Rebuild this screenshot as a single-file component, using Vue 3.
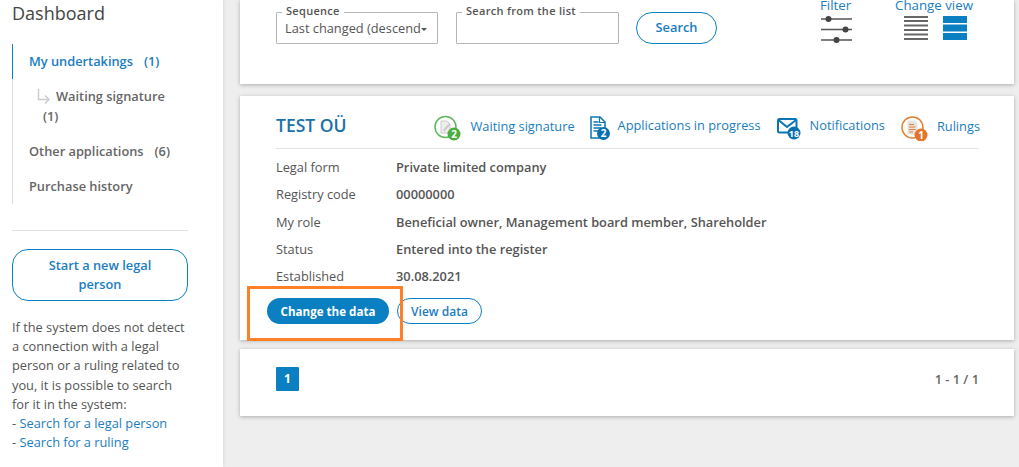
<script setup>
const rows = [
  ['Legal form', 'Private limited company'],
  ['Registry code', '00000000'],
  ['My role', 'Beneficial owner, Management board member, Shareholder'],
  ['Status', 'Entered into the register'],
  ['Established', '30.08.2021'],
]
</script>

<template>
  <div class="page">
    <aside class="side">
      <h2 class="title">Dashboard</h2>
      <nav class="menu">
        <a class="item active"><span>My undertakings</span><span class="count">(1)</span></a>
        <div class="sub">
          <svg class="arrow" width="13" height="15" viewBox="0 0 13 15"><path d="M1.500 0v10.500H12M8 6.500l4 4-4 4" fill="none" stroke="#ccc" stroke-width="1.500"/></svg><span class="subtext">Waiting signature</span>
          <div class="subcount">(1)</div>
        </div>
        <a class="item"><span>Other applications</span><span class="count">(6)</span></a>
        <a class="item"><span>Purchase history</span></a>
      </nav>
      <div class="sep"></div>
      <button class="newbtn">Start a new legal person</button>
      <p class="help">If the system does not detect a connection with a legal person or a ruling related to you, it is possible to search for it in the system:<br>- <a>Search for a legal person</a><br>- <a>Search for a ruling</a></p>
    </aside>
    <main class="main">
      <section class="card top">
        <div class="field seq">
          <span class="legend">Sequence</span>
          <span class="value">Last changed (descend</span><i class="caret"></i>
        </div>
        <div class="field find">
          <span class="legend">Search from the list</span>
        </div>
        <button class="searchbtn">Search</button>
        <div class="tool filter">
          <span class="toollabel">Filter</span>
          <svg width="33" height="28" viewBox="0 0 33 28">
            <g stroke="#555" stroke-width="1.500"><path d="M0 3h31M0 13.500h31M0 24h31"/></g>
            <g fill="#444"><circle cx="7.500" cy="3" r="3"/><circle cx="24.500" cy="13.500" r="3"/><circle cx="15.500" cy="24" r="3"/></g>
          </svg>
        </div>
        <div class="tool view">
          <span class="toollabel">Change view</span>
          <div class="viewicons">
            <svg width="24" height="24" viewBox="0 0 24 24"><path d="M0 1h24M0 5h24M0 9.500h24M0 14h24M0 18.500h24M0 23h24" stroke="#666" stroke-width="2"/></svg>
            <svg width="24" height="24" viewBox="0 0 24 24" fill="#0a7fc2"><rect width="24" height="7"/><rect y="8.500" width="24" height="7"/><rect y="17" width="24" height="7"/></svg>
          </div>
        </div>
      </section>

      <section class="card company">
        <header class="head">
          <h3 class="name">TEST OÜ</h3>
          <div class="links">
            <a class="link l1">
              <span class="ic">
                <svg width="28" height="30" viewBox="0 0 28 30">
                  <circle cx="11.500" cy="16" r="10.500" fill="#fff" stroke="#5cb85c" stroke-width="1.500"/>
                  <path d="M7 10h6l3 3v9H7z" fill="#eee" stroke="#ccc"/>
                  <path d="M9 19l6-7 1.500 1.500-6 7z" fill="#ccc"/>
                  <circle cx="20" cy="23" r="6.500" fill="#4cae3f"/>
                  <text x="20" y="26.500" text-anchor="middle" class="bd">2</text>
                </svg>
              </span>
              <span>Waiting signature</span>
            </a>
            <a class="link l2">
              <span class="ic">
                <svg width="24" height="30" viewBox="0 0 24 30">
                  <path d="M1 6h9l5 5v16H1z" fill="#fff" stroke="#0a75b5" stroke-width="1.500"/>
                  <path d="M9.500 6v5.500H15" fill="none" stroke="#0a75b5" stroke-width="1.200"/>
                  <path d="M3.500 11h5M3.500 14h8M3.500 17h8M3.500 20h5" stroke="#0a75b5" stroke-width="1.300"/>
                  <circle cx="13.500" cy="22.500" r="6.500" fill="#0a70ad"/>
                  <text x="13.500" y="26" text-anchor="middle" class="bd">2</text>
                </svg>
              </span>
              <span class="up">Applications in progress</span>
            </a>
            <a class="link l3">
              <span class="ic">
                <svg width="26" height="30" viewBox="0 0 26 30">
                  <rect x="1" y="8" width="18.500" height="13.500" rx="1.500" fill="#fff" stroke="#0a75b5" stroke-width="2"/>
                  <path d="M1.500 9l8.500 7 9-7" fill="none" stroke="#0a75b5" stroke-width="2"/>
                  <circle cx="17" cy="22" r="6.500" fill="#0a70ad"/>
                  <text x="17" y="25.500" text-anchor="middle" class="bd sm">18</text>
                </svg>
              </span>
              <span class="up">Notifications</span>
            </a>
            <a class="link l4">
              <span class="ic">
                <svg width="28" height="30" viewBox="0 0 28 30">
                  <circle cx="11.500" cy="16.500" r="10.500" fill="#fff" stroke="#e67e30" stroke-width="1.500"/>
                  <path d="M6.500 9.500h7l3 3v11h-10z" fill="#e4e4e4"/>
                  <path d="M8 13.500h5M8 16h6.500M8 18.500h6.500M8 21h4" stroke="#e67e30" stroke-width="1"/>
                  <circle cx="20" cy="24" r="6.500" fill="#e2762a"/>
                  <text x="20" y="27.500" text-anchor="middle" class="bd">1</text>
                </svg>
              </span>
              <span>Rulings</span>
            </a>
          </div>
        </header>
        <dl class="info">
          <div v-for="r in rows" :key="r[0]" class="row">
            <dt>{{ r[0] }}</dt>
            <dd>{{ r[1] }}</dd>
          </div>
        </dl>
        <div class="actions">
          <button class="primary">Change the data</button>
          <button class="outline">View data</button>
        </div>
        <div class="mark"></div>
      </section>

      <section class="card pager">
        <span class="pagenum">1</span>
        <span class="range">1 - 1 / 1</span>
      </section>
    </main>
  </div>
</template>

<style scoped>
.page {
  display: flex;
  height: 467px;
  overflow: hidden;
  background: #eee;
  font-family: "Open Sans", sans-serif;
  font-size: 12.8px;
  color: #555;
}
.side {
  width: 223px;
  flex: none;
  box-sizing: border-box;
  background: #fff;
  padding: 0 35px 0 12px;
  box-shadow: 1px 0 3px rgba(0, 0, 0, 0.08);
}
.title {
  margin: 0;
  height: 44px;
  font-size: 18px;
  line-height: 26px;
  font-weight: 400;
  color: #444;
}
.menu {
  display: flex;
  flex-direction: column;
  border-left: 1px solid #ddd;
  font-weight: 600;
  color: #666;
}
.item {
  display: flex;
  align-items: center;
  box-sizing: border-box;
  height: 35px;
  padding: 0 0 2px 16px;
  margin-left: -1px;
  border-left: 1px solid transparent;
}
.item.active {
  color: #1a7dc0;
  border-left-color: #0a7fc2;
}
.count { margin-left: 11px; }
.sub {
  box-sizing: border-box;
  height: 55px;
  padding-top: 7px;
  line-height: 20px;
}
.arrow { vertical-align: -3px; margin: 0 6px 0 24px; }
.subtext { color: #666; }
.subcount { margin-left: 30px; }
.sep {
  margin-top: 26px;
  height: 1px;
  background: #e2e2e2;
}
.newbtn {
  display: block;
  width: 100%;
  height: 52px;
  margin-top: 18px;
  border: 1px solid #0a7fc2;
  border-radius: 16px;
  background: #fff;
  color: #1a7dc0;
  font: 600 12.8px/19px "Open Sans", sans-serif;
  padding: 0 24px;
}
.help {
  margin: 17px 0 0;
  line-height: 19.2px;
  color: #555;
}
.help a { color: #1a7dc0; }

.main {
  flex: 1;
  min-width: 0;
  padding: 0 5px 0 17px;
  display: flex;
  flex-direction: column;
}
.card {
  background: #fff;
  box-shadow: 0 1px 4px rgba(0, 0, 0, 0.28);
  box-sizing: border-box;
}
.top {
  height: 84px;
  display: flex;
  align-items: flex-start;
  padding: 12px 0 0 36px;
}
.field {
  position: relative;
  box-sizing: border-box;
  height: 32px;
  border: 1px solid #b5b5b5;
  border-radius: 1px;
}
.legend {
  position: absolute;
  top: -9px;
  left: 5px;
  padding: 0 4px;
  background: #fff;
  font-size: 11px;
  line-height: 14px;
  font-weight: 600;
  letter-spacing: 0.3px;
  color: #555;
}
.seq { width: 162px; }
.value {
  position: absolute;
  left: 8px;
  top: 6px;
  line-height: 18px;
  white-space: nowrap;
  color: #555;
}
.caret {
  position: absolute;
  right: 10px;
  top: 15px;
  border: 3px solid transparent;
  border-top-color: #555;
  border-bottom: 0;
}
.find { width: 163px; margin-left: 18px; }
.searchbtn {
  width: 81px;
  height: 32px;
  margin-left: 17px;
  border: 1px solid #0a7fc2;
  border-radius: 16px;
  background: #fff;
  color: #1a7dc0;
  font: 600 12.8px "Open Sans", sans-serif;
  padding: 0 0 2px;
}
.tool {
  display: flex;
  flex-direction: column;
  margin-top: -20px;
}
.toollabel {
  height: 20px;
  line-height: 26px;
  font-size: 13.300px;
  font-weight: 400;
  color: #1a7dc0;
  white-space: nowrap;
}
.filter { margin-left: 103px; width: 33px; }
.filter svg { margin: 4px 0 0 1px; }
.view { margin-left: 42px; }
.viewicons {
  display: flex;
  gap: 15px;
  padding-left: 9px;
  margin-top: 4px;
}

.company {
  position: relative;
  height: 244px;
  margin-top: 12px;
  padding: 0 35px 0 36px;
}
.head {
  display: flex;
  align-items: center;
  justify-content: space-between;
  height: 46px;
  padding-top: 6px;
  box-sizing: content-box;
  border-bottom: 1px solid #e2e2e2;
}
.name {
  margin: 0;
  font-size: 17.500px;
  font-weight: 600;
  color: #1a70a8;
}
.links {
  display: flex;
  align-items: center;
  padding-top: 2px;
  margin-right: -1px;
}
.link {
  display: flex;
  align-items: center;
  color: #1a7dc0;
  white-space: nowrap;
}
.up { margin-bottom: 2px; }
.ic { display: flex; }
.l1 .ic { margin-right: 8px; }
.l2 { margin-left: 15px; }
.l2 .ic { margin-right: 4px; }
.l3 { margin-left: 16px; }
.l3 .ic { margin-right: 7px; }
.l4 { margin-left: 16px; }
.l4 .ic { margin-right: 8px; }
.bd {
  font: 700 10px "Open Sans", sans-serif;
  fill: #fff;
}
.bd.sm { font-size: 9px; }
.info { margin: 4.300px 0 0; }
.row {
  display: flex;
  height: 27.300px;
  align-items: center;
}
dt { width: 120px; flex: none; color: #555; }
dd { margin: 0; font-weight: 600; color: #555; }
.actions {
  display: flex;
  gap: 8px;
  margin: 8.700px 0 0 -9px;
}
.primary {
  width: 122px;
  height: 26px;
  border: 0;
  border-radius: 13px;
  background: #0a7fc2;
  color: #fff;
  font: 700 11.600px "Open Sans", sans-serif;
  padding: 0;
}
.outline {
  width: 85px;
  height: 26px;
  box-sizing: border-box;
  border: 1px solid #0a7fc2;
  border-radius: 13px;
  background: #fff;
  color: #1a7dc0;
  font: 600 12px "Open Sans", sans-serif;
  padding: 0;
}
.mark {
  position: absolute;
  left: 7px;
  top: 190px;
  width: 156px;
  height: 55px;
  box-sizing: border-box;
  border: 3px solid #ff7f27;
}
.pager {
  height: 67px;
  margin-top: 9px;
  padding: 18px 35px 0 36px;
  display: flex;
  align-items: flex-start;
  justify-content: space-between;
}
.pagenum {
  width: 23px;
  height: 24px;
  background: #0a7fc2;
  border-radius: 1px;
  color: #fff;
  font-size: 12px;
  font-weight: 700;
  line-height: 24px;
  text-align: center;
}
.range {
  color: #666;
  font-size: 12.800px;
  font-weight: 600;
  line-height: 24px;
}
</style>
